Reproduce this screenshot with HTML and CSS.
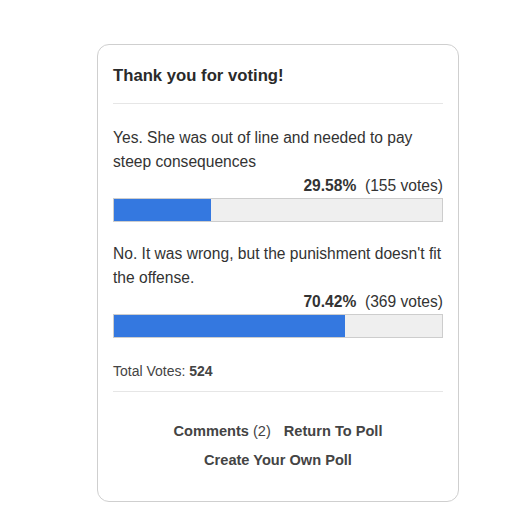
FILE: index.html
```html
<!DOCTYPE html>
<html>
<head>
<meta charset="utf-8">
<link rel="stylesheet" href="styles.css">
</head>
<body>
<div class="poll">
  <h2 class="poll-title">Thank you for voting!</h2>
  <hr class="sep sep-top">
  <div class="option">
    <div class="option-text">Yes. She was out of line and needed to pay steep consequences</div>
    <div class="option-stats"><b>29.58%</b>&nbsp; (155 votes)</div>
    <div class="bar"><div class="bar-fill" style="width:29.58%"></div></div>
  </div>
  <div class="option">
    <div class="option-text">No. It was wrong, but the punishment doesn't fit the offense.</div>
    <div class="option-stats"><b>70.42%</b>&nbsp; (369 votes)</div>
    <div class="bar"><div class="bar-fill" style="width:70.42%"></div></div>
  </div>
  <div class="total">Total Votes: <b>524</b></div>
  <hr class="sep sep-bottom">
  <div class="links">
    <div class="links-row"><a class="link" href="#">Comments <span class="count">(2)</span></a><a class="link" href="#">Return To Poll</a></div>
    <div class="links-row"><a class="link" href="#">Create Your Own Poll</a></div>
  </div>
</div>
</body>
</html>
```
FILE: styles.css
```css
html, body {
  margin: 0;
  padding: 0;
  background: #fff;
}
body {
  font-family: "Liberation Sans", Arial, sans-serif;
  color: #333;
  padding: 44px 0 0 97px;
}
.poll {
  width: 330px;
  border: 1px solid #cfcfcf;
  border-radius: 12px;
  padding: 19px 15px 31px 15px;
}
.poll-title {
  margin: 0;
  font-size: 16.7px;
  font-weight: bold;
  line-height: 24px;
  color: #2a2a2a;
}
.sep {
  border: 0;
  height: 1px;
  background: #e6e6e6;
  margin: 0;
}
.sep-top {
  margin-top: 15px;
  margin-bottom: 22px;
}
.option + .option {
  margin-top: 20px;
}
.option-text {
  font-size: 15.6px;
  line-height: 24px;
}
.option-stats {
  font-size: 15.6px;
  line-height: 24px;
  text-align: right;
}
.option-stats b {
  color: #333;
}
.bar {
  height: 22px;
  border: 1px solid #cdcdcd;
  background: #efefef;
}
.bar-fill {
  height: 100%;
  background: #3478e0;
}
.total {
  margin-top: 24px;
  font-size: 14px;
  line-height: 18px;
  color: #444;
}
.sep-bottom {
  margin-top: 11px;
}
.links {
  margin-top: 29px;
  display: flex;
  flex-direction: column;
  align-items: center;
  gap: 9px;
}
.links-row {
  display: flex;
  gap: 13px;
  justify-content: center;
  line-height: 20px;
}
.link {
  font-size: 14.6px;
  font-weight: bold;
  color: #444;
  text-decoration: none;
}
.count {
  font-weight: normal;
}
```
